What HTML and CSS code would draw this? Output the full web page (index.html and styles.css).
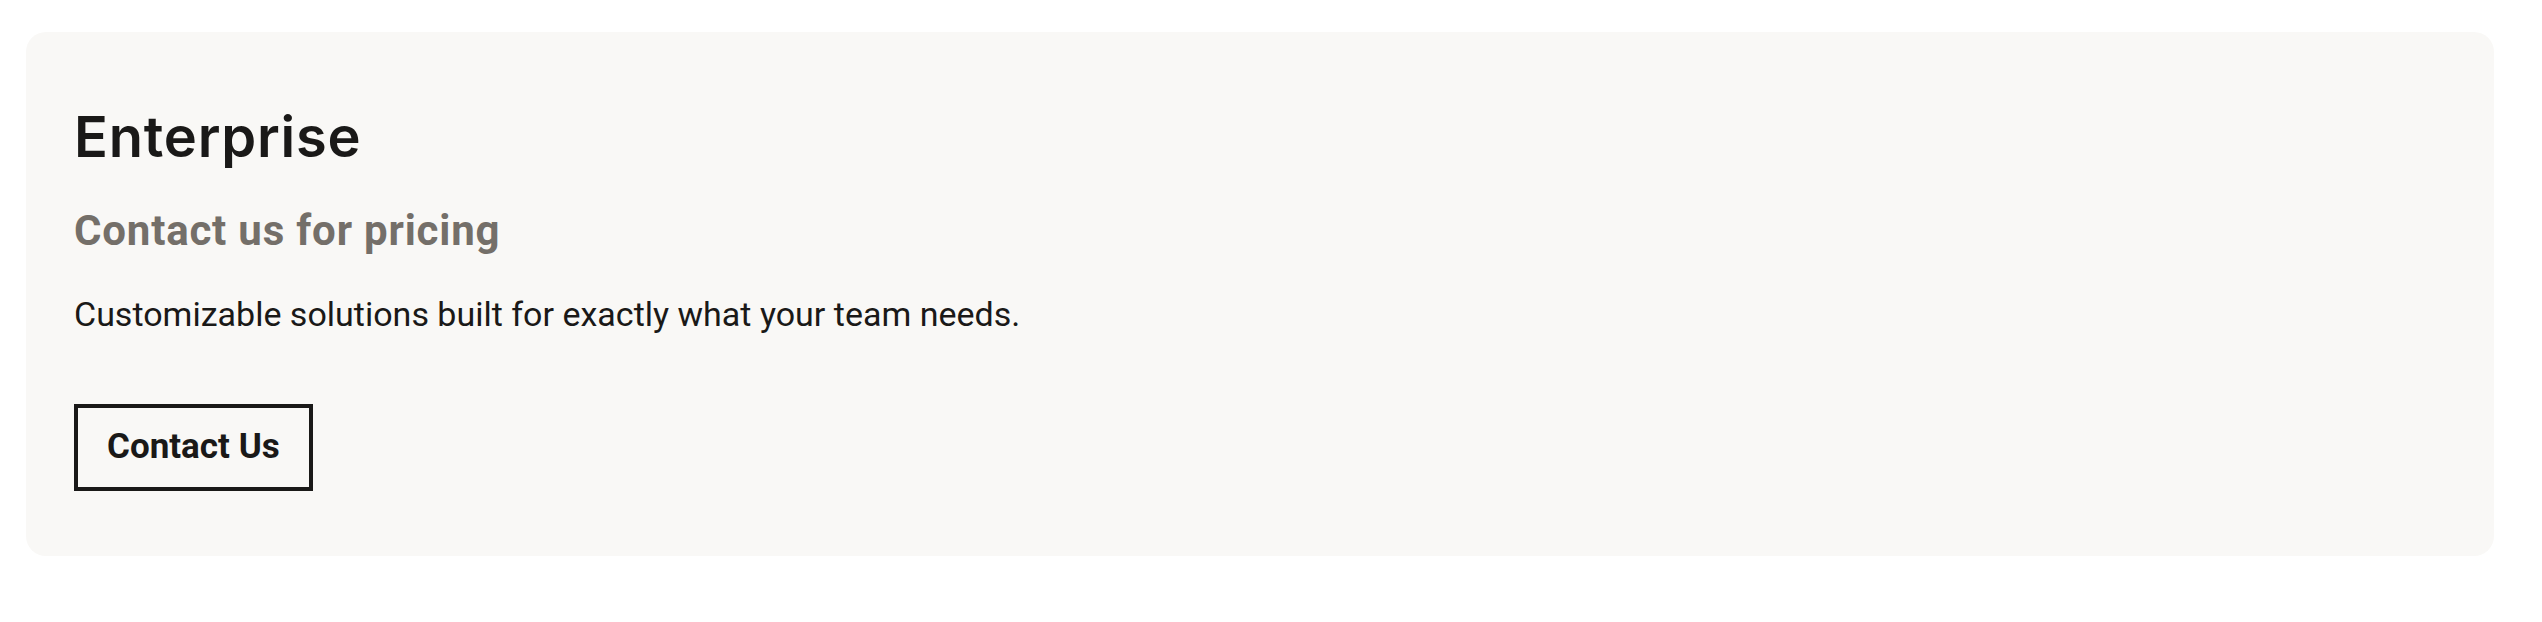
FILE: index.html
```html
<!DOCTYPE html>
<html lang="en">
<head>
<meta charset="utf-8">
<title>Enterprise</title>
<link rel="stylesheet" href="styles.css">
</head>
<body>
<div class="page">
  <section class="card">
    <h2 class="title">Enterprise</h2>
    <p class="price">Contact us for pricing</p>
    <p class="desc">Customizable solutions built for exactly what your team needs.</p>
    <a class="btn" href="#">Contact Us</a>
  </section>
</div>
</body>
</html>
```

FILE: styles.css
```css
html, body {
  margin: 0;
  padding: 0;
  background: #ffffff;
}
body {
  font-family: Roboto, "Liberation Sans", sans-serif;
  color: #1a1918;
}
.page {
  padding: 32px 48px 66px 26px;
}
.card {
  background: #f9f8f6;
  border-radius: 20px;
  padding: 77px 48px 65px 48px;
  display: flex;
  flex-direction: column;
  align-items: flex-start;
}
.title {
  margin: 0;
  font-family: Inter, Roboto, sans-serif;
  font-size: 56px;
  line-height: 56px;
  font-weight: 600;
  letter-spacing: 0.8px;
  color: #1a1918;
}
.price {
  margin: 42px 0 0 0;
  font-size: 42px;
  line-height: 48px;
  font-weight: 700;
  letter-spacing: 0.8px;
  color: #746f69;
}
.desc {
  margin: 39px 0 0 0;
  font-size: 34px;
  line-height: 40px;
  font-weight: 400;
  color: #1a1918;
}
.btn {
  margin-top: 70px;
  display: inline-block;
  border: 4px solid #1a1918;
  padding: 19px 29px 20px 29px;
  font-size: 35px;
  line-height: 40px;
  font-weight: 700;
  color: #1a1918;
  text-decoration: none;
}
```
